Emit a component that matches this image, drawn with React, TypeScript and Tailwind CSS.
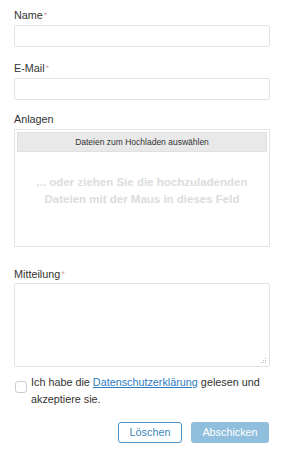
import React from "react";

function Label({ text, req }: { text: string; req?: boolean }) {
  return (
    <div className="h-[16px] leading-[16px] text-[10.8px] text-[#333]">
      {text}
      {req && <span className="text-[#d9a3a3] text-[9px] align-top ml-[1px]">*</span>}
    </div>
  );
}

export default function App() {
  return (
    <div
      className="w-[286px] h-[453px] bg-white pl-[14px] pr-[16px] pt-[7px]"
      style={{ fontFamily: '"Liberation Sans", Arial, sans-serif' }}
    >
      <Label text="Name" req />
      <div className="mt-[2px] h-[22px] border border-[#e3e3e3] rounded-[2px]" />
      <div className="mt-[13px]">
        <Label text="E-Mail" req />
      </div>
      <div className="mt-[2px] h-[22px] border border-[#e3e3e3] rounded-[2px]" />
      <div className="mt-[11px]">
        <Label text="Anlagen" />
      </div>
      <div className="mt-[2px] h-[118px] border border-[#e3e3e3] p-[2px] flex flex-col">
        <div className="h-[20px] bg-[#e9e9e9] border border-[#e0e0e0] flex items-center justify-center text-[8.5px] text-[#333]">
          Dateien zum Hochladen auswählen
        </div>
        <div className="flex-1 flex items-center justify-center text-center text-[11.5px] font-bold leading-[17px] text-[#dcdcdc] pb-[14px]">
          ... oder ziehen Sie die hochzuladenden
          <br />
          Dateien mit der Maus in dieses Feld
        </div>
      </div>
      <div className="mt-[19px]">
        <Label text="Mitteilung" req />
      </div>
      <div className="mt-[1px] h-[84px] border border-[#e3e3e3] rounded-[2px] relative">
        <svg className="absolute right-[2px] bottom-[2px]" width="7" height="7" viewBox="0 0 7 7">
          <rect x="5" y="1" width="1" height="1" fill="#bbb" />
          <rect x="3" y="3" width="1" height="1" fill="#bbb" />
          <rect x="5" y="3" width="1" height="1" fill="#bbb" />
          <rect x="1" y="5" width="1" height="1" fill="#bbb" />
          <rect x="3" y="5" width="1" height="1" fill="#bbb" />
          <rect x="5" y="5" width="1" height="1" fill="#bbb" />
        </svg>
      </div>
      <div className="mt-[7px] flex items-start">
        <div className="mt-[7px] ml-[1px] w-[12px] h-[12px] border border-[#ccc] rounded-[3px] shrink-0" />
        <div className="ml-[4px] text-[10.8px] leading-[17px] text-[#333]">
          Ich habe die{" "}
          <span className="text-[#2b7bbf] underline">Datenschutzerklärung</span> gelesen und
          akzeptiere sie.
        </div>
      </div>
      <div className="mt-[14px] flex justify-end gap-[9px] pr-[1px]">
        <div className="w-[64px] h-[21px] border border-[#4d95c8] rounded-[3px] flex items-center justify-center text-[10.8px] text-[#3a85bd]">
          Löschen
        </div>
        <div className="w-[78px] h-[21px] bg-[#8fbfdd] rounded-[3px] flex items-center justify-center text-[10.8px] text-white">
          Abschicken
        </div>
      </div>
    </div>
  );
}
